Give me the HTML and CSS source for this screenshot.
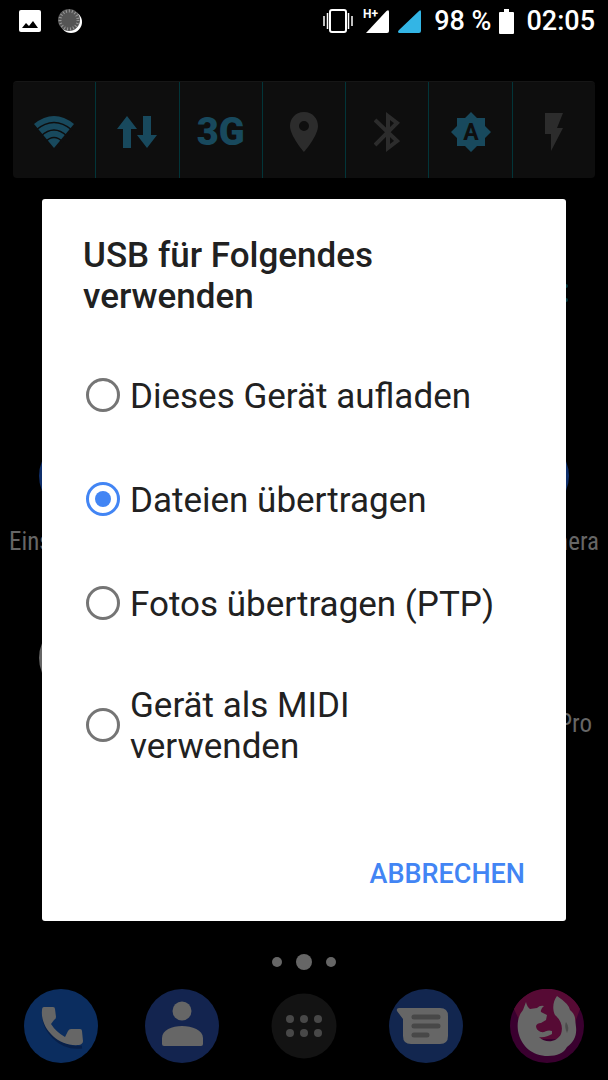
FILE: index.html
```
<!DOCTYPE html>
<html lang="de">
<head>
  <meta charset="UTF-8" />
  <meta name="viewport" content="width=device-width, initial-scale=1.0" />
  <title>USB für Folgendes verwenden</title>
  <link rel="stylesheet" href="styles.css">
</head>
<body>
  <div class="home">
    <header class="status-bar">
      <div class="notifications">
        <svg width="22" height="22" viewBox="0 0 22 22">
          <rect width="22" height="22" rx="2" fill="#fff"/>
          <path d="M3 18 7 13l3 3 4-5 5 7z" fill="#000"/>
        </svg>
        <svg width="24" height="24" viewBox="0 0 24 24">
          <circle cx="13" cy="13" r="11" fill="#fff"/>
          <circle cx="11" cy="11" r="11" fill="#555"/>
          <circle cx="11" cy="11" r="9" fill="none" stroke="#999" stroke-width="3" stroke-dasharray="1 2"/>
        </svg>
      </div>
      <div class="system">
        <svg class="vibrate" width="30" height="24" viewBox="0 0 30 24" fill="none" stroke="#fff">
          <rect x="7" y="1" width="16" height="22" rx="2" stroke-width="2"/>
          <path d="M4.500 4v16M25.500 4v16M1 7v10M29 7v10" stroke-width="1.500"/>
        </svg>
        <svg class="signal" width="29" height="36" viewBox="0 0 29 36">
          <path d="M6 30 26.500 8Q29 6 29 9v19q0 2-2 2z" fill="#fff"/>
          <text x="3" y="15" class="network">H+</text>
        </svg>
        <svg class="signal-two" width="23" height="24" viewBox="0 0 23 24">
          <path d="M1 24Q-1 23 1 21L21 2Q23 0 23 3v19q0 2-2 2z" fill="#33b5e5"/>
        </svg>
        <span class="percent">98 %</span>
        <svg class="battery" width="15" height="25" viewBox="0 0 15 25">
          <path d="M5 0h5v3h4q1 0 1 1v20q0 1-1 1H1q-1 0-1-1V4q0-1 1-1h4z" fill="#fff"/>
        </svg>
        <time>02:05</time>
      </div>
    </header>

    <div class="power-widget">
      <div class="toggle on">
        <svg width="40" height="32" viewBox="0 0 40 32">
          <path d="M0 8Q20-8 40 8L20 32z" fill="currentColor"/>
          <path d="M2 14Q20-1 38 14M7 20Q20 8 33 20M11 26Q20 17 29 26" fill="none" stroke="#0e0e0e" stroke-width="1.500"/>
        </svg>
      </div>
      <div class="toggle on">
        <svg width="40" height="32" viewBox="0 0 40 32" fill="currentColor">
          <path d="M10 0 20 13h-6v19H6V13H0zM30 32 20 19h6V0h8v19h6z"/>
        </svg>
      </div>
      <div class="toggle on"><span class="mode">3G</span></div>
      <div class="toggle">
        <svg width="30" height="40" viewBox="0 0 30 40" fill="currentColor" fill-rule="evenodd">
          <path d="M15 0C6 0 1 7 1 14c0 10 14 26 14 26s14-16 14-26C29 7 24 0 15 0zm0 9a5 5 0 1 1 0 10 5 5 0 0 1 0-10z"/>
        </svg>
      </div>
      <div class="toggle">
        <svg width="26" height="42" viewBox="0 0 26 42" fill="none" stroke="currentColor" stroke-width="4">
          <path d="M1 9 23 30 14 37V5l9 7L1 34"/>
        </svg>
      </div>
      <div class="toggle on">
        <svg width="40" height="40" viewBox="0 0 40 40">
          <path d="m20 0 6 6h8v8l6 6-6 6v8h-8l-6 6-6-6H6v-8l-6-6 6-6V6h8z" fill="currentColor"/>
          <text x="20" y="28" class="auto">A</text>
        </svg>
      </div>
      <div class="toggle">
        <svg width="20" height="38" viewBox="0 0 20 38" fill="currentColor">
          <path d="M1 0h18l-6 15h6L7 38V21H1z"/>
        </svg>
      </div>
    </div>

    <div class="weather">
      <svg width="12" height="20" viewBox="0 0 12 20" fill="#04383d">
        <circle cx="10" cy="3" r="2"/><circle cx="10" cy="17" r="2"/>
      </svg>
    </div>

    <div class="apps">
      <div class="app">
        <span class="app-icon blue"></span>
        <span class="app-name start">Einstellungen</span>
      </div>
      <div class="app last">
        <span class="app-icon blue"></span>
        <span class="app-name end">Camera</span>
      </div>
      <div class="app">
        <span class="app-icon gray"></span>
      </div>
      <div class="app last">
        <span class="app-icon"></span>
        <span class="app-name end pro">Pro</span>
      </div>
    </div>

    <div class="pages"><i></i><i class="current"></i><i></i></div>

    <nav class="dock">
      <svg width="74" height="74" viewBox="0 0 74 74">
        <circle cx="37" cy="37" r="37" fill="#0b2d5f"/>
        <path d="M20 24c-2 16 15 37 38 34" fill="none" stroke="#08204a" stroke-width="3"/>
        <path d="M20 18h9q2 0 2 2l1 8q0 2-2 3l-3 4q5 8 14 13l3-6q1-2 3-2h9q2 0 2 2l1 10q0 3-4 4C34 58 16 39 18 21q0-3 2-3z" fill="#666"/>
      </svg>
      <svg width="74" height="74" viewBox="0 0 74 74">
        <circle cx="37" cy="37" r="37" fill="#13244f"/>
        <circle cx="37" cy="22" r="9.500" fill="#666"/>
        <path d="M17 49c0-8 10-12 20-12s21 4 21 12v6q0 2-2 2H19q-2 0-2-2z" fill="#666"/>
      </svg>
      <svg width="74" height="74" viewBox="0 0 74 74">
        <circle cx="37" cy="37" r="32.500" fill="#131313"/>
        <g fill="#484848">
          <circle cx="23" cy="30" r="4"/><circle cx="37" cy="30" r="4"/><circle cx="51" cy="30" r="4"/>
          <circle cx="23" cy="44" r="4"/><circle cx="37" cy="44" r="4"/><circle cx="51" cy="44" r="4"/>
        </g>
      </svg>
      <svg width="74" height="74" viewBox="0 0 74 74">
        <circle cx="37" cy="37" r="37" fill="#12264f"/>
        <path d="M10 19h41q8 0 8 8v20q0 8-8 8H22q-8 0-8-8V30L8 22q-1-3 2-3z" fill="#666"/>
        <path d="M25 28h24M25 37h24M25 46h13" stroke="#484848" stroke-width="5" stroke-linecap="round"/>
      </svg>
      <svg width="74" height="74" viewBox="0 0 74 74">
        <circle cx="37" cy="37" r="37" fill="#3a002f"/>
        <path d="M4 20a37 37 0 0 1 66 0l-11 30H18z" fill="#560a34"/>
        <path d="M16 13L13 21C8 27 7 34 8 42C11 57 22 67 38 67C47 67 54 64 57 58C64 53 67 46 66 38L65 29Q64 24 60 21Q59 15 47 7C43 12 42 20 45 26C52 32 53 39 51 45C47 53 36 55 29 48C34 49 38 47 42 45V42C37 40 35 44 31 43C28 42 26 40 26 37Q27 34 31 34L36 31L37 26L31 23Q30 20 34 17Q30 16 27 19L20 20Q17 18 16 13z" fill="#676767"/>
        <path d="M56 33q-2 4 1 11 3-5-1-11z" fill="#4c4c4c"/>
      </svg>
    </nav>
  </div>

  <div class="overlay">
    <form class="dialog" role="dialog" aria-labelledby="dialogTitle">
      <h1 id="dialogTitle">USB für Folgendes verwenden</h1>
      <div class="options">
        <label><input type="radio" name="usb" value="charge"><span>Dieses Gerät aufladen</span></label>
        <label><input type="radio" name="usb" value="mtp" checked><span>Dateien übertragen</span></label>
        <label><input type="radio" name="usb" value="ptp"><span>Fotos übertragen (PTP)</span></label>
        <label><input type="radio" name="usb" value="midi"><span>Gerät als MIDI verwenden</span></label>
      </div>
      <div class="actions">
        <button type="button">ABBRECHEN</button>
      </div>
    </form>
  </div>
</body>
</html>
```

FILE: styles.css
```
* {
  box-sizing: border-box;
}

body {
  margin: 0;
  background: #000;
  color: #fff;
  font-family: Roboto, "Liberation Sans", sans-serif;
}

svg {
  display: block;
  flex: none;
}

.home {
  display: flex;
  flex-direction: column;
  min-height: 100vh;
}

/* status bar */

.status-bar {
  display: flex;
  justify-content: space-between;
  height: 42px;
  padding: 0 13px 0 19px;
  font-size: 27px;
  font-weight: 500;
}

.notifications, .system {
  display: flex;
  align-items: center;
}

.notifications {
  gap: 17px;
}

.signal {
  margin-left: 7px;
}

.signal-two {
  margin-left: 9px;
}

.percent {
  margin-left: 13px;
}

.battery {
  margin: 0 12px 0 8px;
}

.network {
  font-size: 12px;
  font-weight: 700;
  fill: #fff;
  stroke: #000;
  stroke-width: 2px;
  paint-order: stroke;
}

/* power control widget */

.power-widget {
  display: flex;
  height: 97px;
  margin: 39px 13px 0;
  background: #0e0e0e;
  border-top: 1px solid #161616;
  border-radius: 4px;
}

.toggle {
  flex: 1;
  display: flex;
  align-items: center;
  justify-content: center;
  padding-top: 3px;
  color: #2c2c2c;
}

.toggle + .toggle {
  border-left: 1px solid #023539;
}

.toggle.on {
  color: #18495d;
}

.mode {
  font-size: 38px;
  font-weight: 900;
}

.auto {
  font-size: 23px;
  font-weight: 700;
  text-anchor: middle;
  fill: #0e0e0e;
}

/* home screen */

.weather {
  flex: 1;
  display: flex;
  justify-content: flex-end;
  padding: 105px 40px 0 0;
}

.apps {
  display: grid;
  grid-template-columns: repeat(4, 1fr);
  row-gap: 65px;
}

.app {
  display: flex;
  flex-direction: column;
  gap: 15px;
}

.app.last {
  grid-column: 4;
}

.app-icon {
  width: 74px;
  height: 74px;
  align-self: center;
  border-radius: 50%;
}

.app-icon.blue {
  background: #0f2f6b;
}

.app-icon.gray {
  background: #666;
}

.app-name {
  font-family: "Roboto Condensed", "Liberation Sans Narrow", Roboto, sans-serif;
  font-size: 25px;
  line-height: 28px;
  color: #666;
}

.app-name.start {
  padding-left: 9px;
}

.app-name.end {
  padding-right: 9px;
  text-align: right;
}

.app-name.pro {
  padding-right: 16px;
}

.pages {
  display: flex;
  align-items: center;
  justify-content: center;
  gap: 14px;
  margin: 216px 0 19px;
}

.pages i {
  width: 10px;
  height: 10px;
  border-radius: 50%;
  background: #666;
}

.pages .current {
  width: 16px;
  height: 16px;
}

.dock {
  display: grid;
  grid-template-columns: repeat(5, 1fr);
  justify-items: center;
  padding-bottom: 17px;
}

/* dialog */

.overlay {
  position: fixed;
  inset: 0;
  display: flex;
  align-items: center;
  padding: 40px 42px 0;
}

.dialog {
  flex: 1;
  padding: 36px 0 17px;
  background: #fff;
  border-radius: 3px;
  color: #212121;
}

h1 {
  margin: 0 41px 26px;
  font-size: 35px;
  line-height: 41px;
  font-weight: 500;
}

.options label {
  display: flex;
  align-items: center;
  gap: 10px;
  min-height: 104px;
  padding: 28px 41px 28px 44px;
  font-size: 35px;
  line-height: 41px;
}

.options span {
  padding-top: 2px;
}

.options input {
  appearance: none;
  display: grid;
  place-items: center;
  flex: none;
  width: 34px;
  height: 34px;
  margin: 0;
  border: 3px solid #757575;
  border-radius: 50%;
}

.options input:checked {
  border-color: #4285f4;
}

.options input:checked::before {
  content: "";
  width: 16px;
  height: 16px;
  border-radius: 50%;
  background: #4285f4;
}

.actions {
  display: flex;
  justify-content: flex-end;
  padding: 49px 25px 0;
}

.actions button {
  height: 60px;
  padding: 0 16px;
  border: none;
  background: transparent;
  color: #4285f4;
  font: 500 27px Roboto, "Liberation Sans", sans-serif;
  cursor: pointer;
}
```
